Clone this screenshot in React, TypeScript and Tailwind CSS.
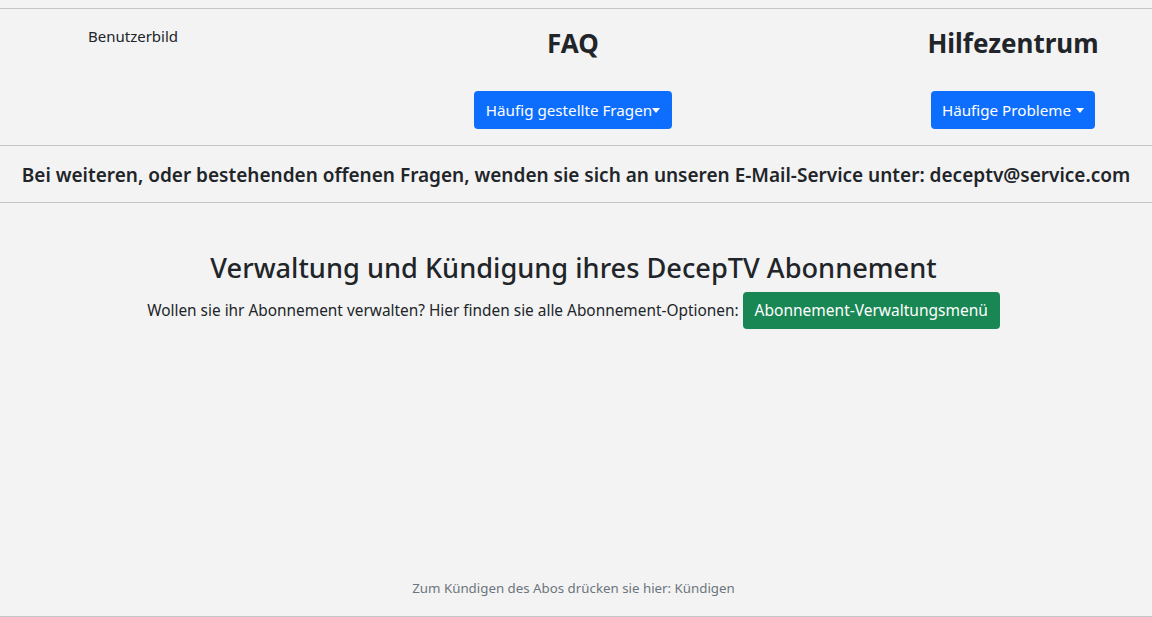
import React from "react";

const font = { fontFamily: '"Noto Sans", "Open Sans", sans-serif' };

const Caret = () => (
  <span className="inline-block h-0 w-0 border-x-[4px] border-t-[5px] border-x-transparent border-t-white align-middle" />
);

export default function App() {
  return (
    <div className="min-h-screen bg-[#f3f3f3] pt-2 text-[#212529]" style={font}>
      <header className="grid h-[138px] grid-cols-[266px_614px_266px] border-y border-[#c4c4c4]">
        <div className="pt-[15px] text-center text-[15px] leading-6">Benutzerbild</div>
        <div className="flex flex-col items-center pt-[18px]">
          <h2 className="text-[26px] font-bold leading-[32px]">FAQ</h2>
          <button className="mt-[32px] flex h-[38px] items-center rounded bg-[#0d6efd] px-[12px] text-[15.2px] text-white">
            Häufig gestellte Fragen
            <Caret />
          </button>
        </div>
        <div className="flex flex-col items-center pt-[18px]">
          <h2 className="text-[26px] font-bold leading-[32px]">Hilfezentrum</h2>
          <button className="mt-[32px] flex h-[38px] items-center rounded bg-[#0d6efd] px-[11px] text-[15.2px] text-white">
            Häufige Probleme
            <span className="ml-[5px]" />
            <Caret />
          </button>
        </div>
      </header>

      <div className="flex h-[57px] items-center justify-center border-b border-[#c4c4c4] pt-[2px] text-[19px] font-semibold">
        Bei weiteren, oder bestehenden offenen Fragen, wenden sie sich an unseren E-Mail-Service unter: deceptv@service.com
      </div>

      <main className="flex h-[414px] flex-col items-center border-b border-[#c4c4c4] pt-[48px]">
        <h3 className="pr-[5px] text-[27.2px] font-medium leading-[34px]">Verwaltung und Kündigung ihres DecepTV Abonnement</h3>
        <div className="mt-[7px] flex items-center gap-[4px] pr-[5px] text-[15.4px]">
          <span>Wollen sie ihr Abonnement verwalten? Hier finden sie alle Abonnement-Optionen:</span>
          <button className="flex h-[37px] items-center rounded bg-[#198754] px-[12px] text-[15.5px] text-white">
            Abonnement-Verwaltungsmenü
          </button>
        </div>
        <p className="mt-auto mb-[17px] pr-[5px] text-[13.3px] text-[#6c757d]">Zum Kündigen des Abos drücken sie hier: Kündigen</p>
      </main>
    </div>
  );
}
